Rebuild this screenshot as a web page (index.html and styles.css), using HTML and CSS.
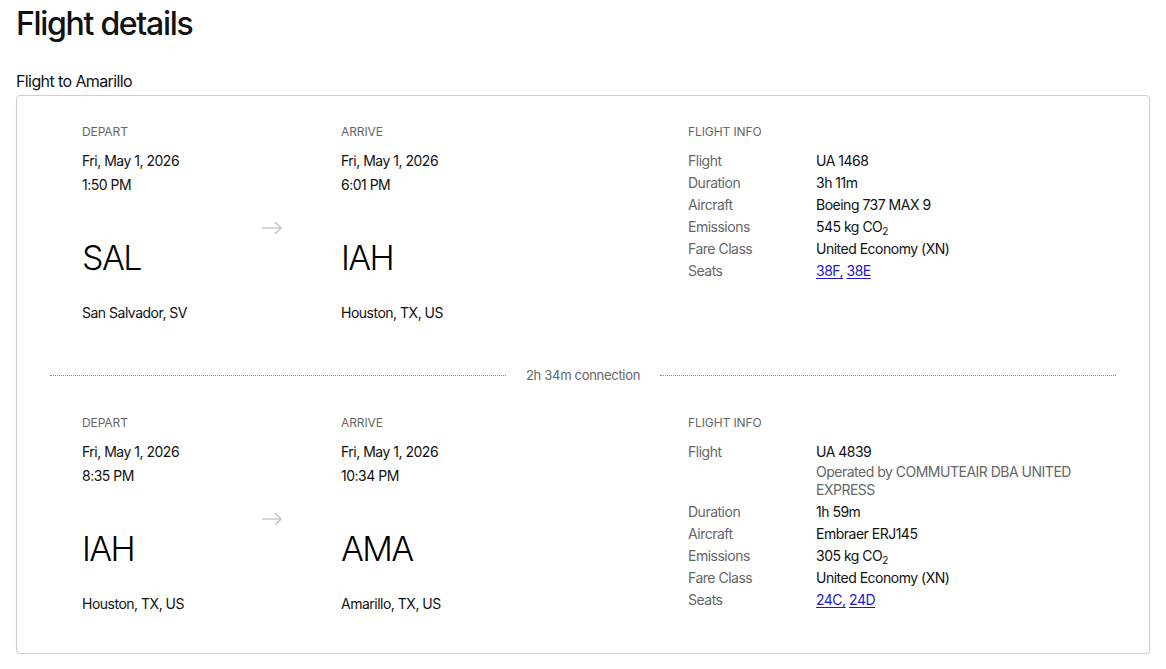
FILE: index.html
```html
<!DOCTYPE html>
<html lang="en">
<head>
<meta charset="utf-8">
<title>Flight details</title>
<link rel="stylesheet" href="styles.css">
</head>
<body>
<h1 class="title">Flight details</h1>
<h2 class="subtitle">Flight to Amarillo</h2>
<section class="card">
  <div class="segment">
    <div class="point">
      <div class="label">Depart</div>
      <div class="line">Fri, May 1, 2026</div>
      <div class="line">1:50 PM</div>
      <div class="code">SAL</div>
      <div class="city">San Salvador, SV</div>
    </div>
    <div class="arrow"><svg width="22" height="14" viewBox="0 0 22 14"><path d="M1 7h19M14 1l6 6-6 6" fill="none" stroke="#c8c8c8" stroke-width="1.6"/></svg></div>
    <div class="point">
      <div class="label">Arrive</div>
      <div class="line">Fri, May 1, 2026</div>
      <div class="line">6:01 PM</div>
      <div class="code">IAH</div>
      <div class="city">Houston, TX, US</div>
    </div>
    <div class="info">
      <div class="label">Flight info</div>
      <dl class="info-grid">
        <dt>Flight</dt><dd>UA 1468</dd>
        <dt>Duration</dt><dd>3h 11m</dd>
        <dt>Aircraft</dt><dd>Boeing 737 MAX 9</dd>
        <dt>Emissions</dt><dd>545 kg CO<sub>2</sub></dd>
        <dt>Fare Class</dt><dd>United Economy (XN)</dd>
        <dt>Seats</dt><dd><a href="#">38F,</a> <a href="#">38E</a></dd>
      </dl>
    </div>
  </div>
  <div class="connection"><span class="rule"></span><span class="conn-text">2h 34m connection</span><span class="rule"></span></div>
  <div class="segment">
    <div class="point">
      <div class="label">Depart</div>
      <div class="line">Fri, May 1, 2026</div>
      <div class="line">8:35 PM</div>
      <div class="code">IAH</div>
      <div class="city">Houston, TX, US</div>
    </div>
    <div class="arrow"><svg width="22" height="14" viewBox="0 0 22 14"><path d="M1 7h19M14 1l6 6-6 6" fill="none" stroke="#c8c8c8" stroke-width="1.6"/></svg></div>
    <div class="point">
      <div class="label">Arrive</div>
      <div class="line">Fri, May 1, 2026</div>
      <div class="line">10:34 PM</div>
      <div class="code">AMA</div>
      <div class="city">Amarillo, TX, US</div>
    </div>
    <div class="info">
      <div class="label">Flight info</div>
      <dl class="info-grid">
        <dt>Flight</dt><dd>UA 4839<span class="operated">Operated by COMMUTEAIR DBA UNITED EXPRESS</span></dd>
        <dt>Duration</dt><dd>1h 59m</dd>
        <dt>Aircraft</dt><dd>Embraer ERJ145</dd>
        <dt>Emissions</dt><dd>305 kg CO<sub>2</sub></dd>
        <dt>Fare Class</dt><dd>United Economy (XN)</dd>
        <dt>Seats</dt><dd><a href="#">24C,</a> <a href="#">24D</a></dd>
      </dl>
    </div>
  </div>
</section>
</body>
</html>
```
FILE: styles.css
```css
* { box-sizing: border-box; }
html, body { background: #fff; }
body {
  margin: 0;
  padding: 0 16px;
  font-family: Inter, "Noto Sans", sans-serif;
  color: #111;
  letter-spacing: -0.5px;
}
.title {
  margin: 4px 0 0;
  font-size: 32px;
  line-height: 40px;
  font-weight: 500;
  letter-spacing: -1.3px;
}
.subtitle {
  margin: 25px 0 2px;
  font-size: 16px;
  line-height: 24px;
  font-weight: 400;
  letter-spacing: -0.6px;
}
.card {
  border: 1px solid #cfcfcf;
  border-radius: 4px;
  box-shadow: 0 1px 1px rgba(0,0,0,0.12);
  padding: 0 33px 39px;
}
.segment {
  display: grid;
  grid-template-columns: 179px 80px 347px 1fr;
  padding: 28px 0 0 32px;
}
.connection + .segment { padding-top: 31px; }
.label {
  font-size: 12px;
  line-height: 16px;
  text-transform: uppercase;
  color: #666;
  letter-spacing: -0.1px;
  margin-bottom: 9px;
}
.line {
  font-size: 14px;
  line-height: 24px;
}
.code {
  font-size: 34px;
  line-height: 40px;
  font-weight: 300;
  margin-top: 41px;
  letter-spacing: -1.6px;
  color: #000;
}
.city {
  font-size: 14px;
  line-height: 20px;
  margin-top: 25px;
}
.arrow {
  padding-top: 97px;
}
.arrow svg { display: block; }
.info .label { margin-bottom: 10px; }
.info-grid {
  display: grid;
  grid-template-columns: 128px 262px;
  margin: 0;
  font-size: 14px;
  line-height: 22px;
}
.info-grid dt { color: #666; }
.info-grid dd { margin: 0; }
.info-grid sub { font-size: 10px; line-height: 0; vertical-align: -3px; }
.operated {
  display: block;
  color: #666;
  line-height: 18px;
  padding-bottom: 2px;
}
.info-grid a { color: #2318d0; text-decoration: underline; text-underline-offset: 2px; }
.connection {
  display: flex;
  align-items: center;
  gap: 20px;
  margin-top: 43px;
}
.rule {
  flex: 1;
  border-top: 1px dotted #888;
}
.conn-text {
  font-size: 13px;
  line-height: 18px;
  color: #666;
  letter-spacing: -0.3px;
}
```
